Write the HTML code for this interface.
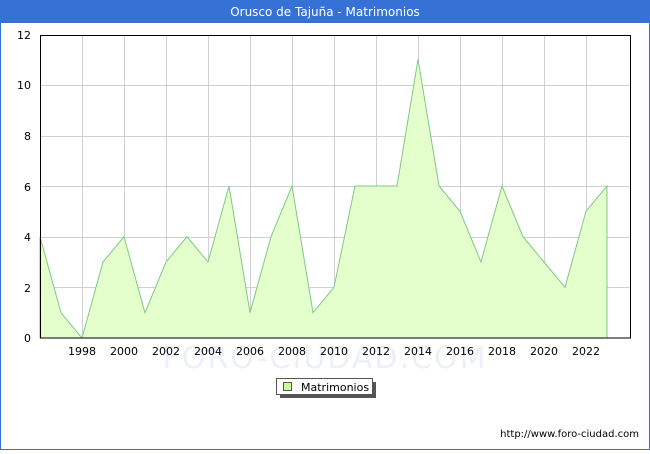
<!DOCTYPE html>
<html><head><meta charset="utf-8"><style>
body{margin:0;width:650px;height:450px;overflow:hidden;font-family:"DejaVu Sans","Liberation Sans",sans-serif;}
</style></head><body>
<svg width="650" height="450" xmlns="http://www.w3.org/2000/svg" font-family="DejaVu Sans, Liberation Sans, sans-serif">
<rect x="0" y="0" width="650" height="450" fill="#fff"/>
<rect x="0.5" y="0.5" width="649" height="449" fill="none" stroke="#3672d6" stroke-width="1"/>
<rect x="0" y="0" width="650" height="23" fill="#3672d6"/>
<text x="325" y="16" fill="#fff" font-size="12" text-anchor="middle">Orusco de Tajuña - Matrimonios</text>
<g stroke="#d0d0d0" stroke-width="1">
<line x1="40" y1="85.5" x2="630" y2="85.5"/><line x1="40" y1="136.5" x2="630" y2="136.5"/><line x1="40" y1="186.5" x2="630" y2="186.5"/><line x1="40" y1="237.5" x2="630" y2="237.5"/><line x1="40" y1="287.5" x2="630" y2="287.5"/>
<line x1="82.5" y1="35" x2="82.5" y2="338"/><line x1="124.5" y1="35" x2="124.5" y2="338"/><line x1="166.5" y1="35" x2="166.5" y2="338"/><line x1="208.5" y1="35" x2="208.5" y2="338"/><line x1="250.5" y1="35" x2="250.5" y2="338"/><line x1="292.5" y1="35" x2="292.5" y2="338"/><line x1="334.5" y1="35" x2="334.5" y2="338"/><line x1="376.5" y1="35" x2="376.5" y2="338"/><line x1="418.5" y1="35" x2="418.5" y2="338"/><line x1="460.5" y1="35" x2="460.5" y2="338"/><line x1="502.5" y1="35" x2="502.5" y2="338"/><line x1="544.5" y1="35" x2="544.5" y2="338"/><line x1="586.5" y1="35" x2="586.5" y2="338"/>
</g>
<polygon fill="#e4fecc" stroke="#7fc88a" stroke-width="1" points="40,236.7 61,312.7 82,338 103,262 124,236.7 145,312.7 166,262 187,236.7 208,262 229,186 250,312.7 271,236.7 292,186 313,312.7 334,287.3 355,186 376,186 397,186 418,59.3 439,186 460,211.3 481,262 502,186 523,236.7 544,262 565,287.3 586,211.3 607,186 607,338 40,338"/>
<text x="325" y="368" font-size="30" fill="#eef0f8" text-anchor="middle" letter-spacing="2">FORO-CIUDAD.COM</text>
<rect x="40.5" y="35.5" width="590" height="302.5" fill="none" stroke="#000" stroke-width="1"/>
<g font-size="11" fill="#000" text-anchor="end">
<text x="31" y="342">0</text><text x="31" y="292">2</text><text x="31" y="241">4</text><text x="31" y="191">6</text><text x="31" y="140">8</text><text x="31" y="89">10</text><text x="31" y="39">12</text>
</g>
<g font-size="11" fill="#000" text-anchor="middle">
<text x="82" y="355">1998</text><text x="124" y="355">2000</text><text x="166" y="355">2002</text><text x="208" y="355">2004</text><text x="250" y="355">2006</text><text x="292" y="355">2008</text><text x="334" y="355">2010</text><text x="376" y="355">2012</text><text x="418" y="355">2014</text><text x="460" y="355">2016</text><text x="502" y="355">2018</text><text x="544" y="355">2020</text><text x="586" y="355">2022</text>
</g>
<rect x="280" y="382" width="96" height="16" fill="#555"/>
<rect x="276.5" y="378.5" width="96" height="16" fill="#fff" stroke="#555"/>
<rect x="283.5" y="382.5" width="8" height="8" fill="#ccff99" stroke="#555"/>
<text x="301" y="391" font-size="11" fill="#000">Matrimonios</text>
<text x="639" y="437" font-size="10" fill="#000" text-anchor="end">http://www.foro-ciudad.com</text>
</svg>
</body></html>
